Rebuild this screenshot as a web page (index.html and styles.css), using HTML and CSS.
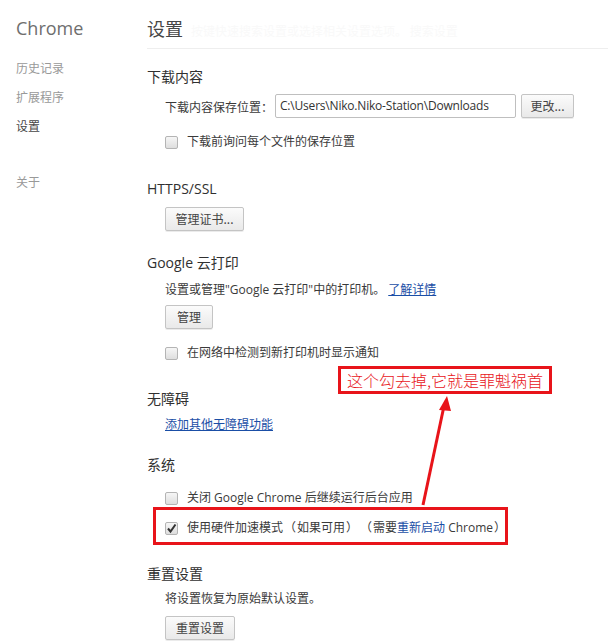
FILE: index.html
```html
<!DOCTYPE html>
<html lang="zh-CN">
<head>
<meta charset="utf-8">
<title>设置</title>
<link rel="stylesheet" href="styles.css">
</head>
<body>
<div class="page">
  <nav class="sidebar">
    <h1 class="brand">Chrome</h1>
    <ul class="nav">
      <li>历史记录</li>
      <li>扩展程序</li>
      <li class="current">设置</li>
      <li class="about">关于</li>
    </ul>
  </nav>
  <main class="main">
    <header class="page-head">
      <h2 class="page-title">设置</h2>
      <span class="search-hint">按键快速搜索设置或选择相关设置选项。 搜索设置</span>
    </header>

    <section class="sec s-download">
      <h3 class="sec-title">下载内容</h3>
      <div class="row row-path">
        <span class="label">下载内容保存位置：</span>
        <span class="path">C:\Users\Niko.Niko-Station\Downloads</span>
        <button class="btn btn-change">更改...</button>
      </div>
      <label class="check row-check gap14"><span class="box"></span><span>下载前询问每个文件的保存位置</span></label>
    </section>

    <section class="sec s-https">
      <h3 class="sec-title">HTTPS/SSL</h3>
      <button class="btn btn-first">管理证书...</button>
    </section>

    <section class="sec s-print">
      <h3 class="sec-title">Google 云打印</h3>
      <p class="text t-print">设置或管理"Google 云打印"中的打印机。 <a class="link">了解详情</a></p>
      <button class="btn btn-print">管理</button>
      <label class="check row-check gap14"><span class="box"></span><span>在网络中检测到新打印机时显示通知</span></label>
    </section>

    <section class="sec s-a11y">
      <h3 class="sec-title">无障碍</h3>
      <p class="text t-a11y"><a class="link">添加其他无障碍功能</a></p>
    </section>

    <section class="sec s-system">
      <h3 class="sec-title">系统</h3>
      <label class="check row-check gap13"><span class="box"></span><span>关闭 Google Chrome 后继续运行后台应用</span></label>
      <label class="check row-check gap10"><span class="box checked"><svg viewBox="0 0 13 13" width="13" height="13"><path d="M3 6.5 L5.5 9.5 L10.5 2.5" fill="none" stroke="#333" stroke-width="2"/></svg></span><span>使用硬件加速模式<span class="paren">（</span>如果可用<span class="paren">）</span><span class="paren">（</span>需要<span class="blue">重新启动</span> Chrome<span class="paren">）</span></span></label>
    </section>

    <section class="sec s-reset">
      <h3 class="sec-title">重置设置</h3>
      <p class="text t-reset">将设置恢复为原始默认设置。</p>
      <button class="btn btn-reset">重置设置</button>
    </section>
  </main>
</div>

<div class="note">这个勾去掉,它就是罪魁祸首</div>
<div class="note-box"></div>
<svg class="arrow" width="608" height="644" viewBox="0 0 608 644">
  <line x1="423" y1="505" x2="444" y2="406" stroke="#e8141a" stroke-width="3"/>
  <polygon points="447,396 439,410 451,411" fill="#e8141a"/>
</svg>
</body>
</html>
```

FILE: styles.css
```css
* { box-sizing: border-box; }
html, body { margin: 0; padding: 0; background: #fff; }
body {
  font-family: "Noto Sans CJK SC", "Open Sans", sans-serif;
  font-size: 12px;
  color: #3a3a3a;
  position: relative;
  width: 608px;
  height: 644px;
  overflow: hidden;
}
.page { display: flex; }
.sidebar { width: 147px; padding-left: 16px; flex: none; }
.brand {
  margin: 17px 0 0;
  font-family: "Open Sans", "Noto Sans CJK SC", sans-serif;
  font-weight: 400;
  font-size: 18px;
  line-height: 22px;
  color: #6e6e6e;
}
.nav { list-style: none; margin: 19px 0 0; padding: 0; }
.nav li { line-height: 20px; height: 20px; color: #999; margin-bottom: 9px; font-size: 12px; }
.nav li.current { color: #464646; }
.nav li.about { margin-top: 36px; }

.main { flex: 1; }
.page-head {
  display: flex;
  align-items: baseline;
  padding-top: 17px;
  height: 49px;
  border-bottom: 1px solid #eeeeee;
}
.page-title {
  margin: 0;
  font-weight: 400;
  font-size: 18px;
  line-height: 22px;
  color: #464646;
}
.search-hint { margin-left: 8px; color: #f9f9f9; font-size: 12px; }

.sec-title {
  margin: 0;
  height: 20px;
  line-height: 20px;
  font-size: 14px;
  font-weight: 400;
  color: #303030;
  font-family: "Open Sans", "Noto Sans CJK SC", sans-serif;
}
.s-download { margin-top: 18px; }
.s-https { margin-top: 27px; }
.s-print { margin-top: 22px; }
.s-a11y { margin-top: 26px; }
.s-system { margin-top: 20px; }
.s-reset { margin-top: 26px; }

.row, .check, .text, .btn { margin-left: 18px; }
.row-path { display: flex; align-items: center; margin-top: 7px; height: 24px; }
.label { margin-right: 2px; }
.path {
  width: 241px;
  height: 24px;
  border: 1px solid #bfbfbf;
  border-radius: 2px;
  line-height: 22px;
  padding-left: 4px;
  font-family: "Open Sans", sans-serif;
  font-size: 12px;
  color: #333;
  letter-spacing: -0.2px;
  white-space: nowrap;
  overflow: hidden;
}
.row .btn { margin-left: 5px; }

.btn {
  display: block;
  height: 24px;
  padding: 0;
  text-align: center;
  border: 1px solid #c4c4c4;
  border-radius: 2px;
  background: linear-gradient(#fbfbfb, #e9e9e9);
  box-shadow: 0 1px 0 rgba(0,0,0,0.08);
  font-family: "Noto Sans CJK SC", "Open Sans", sans-serif;
  font-size: 12px;
  color: #444;
  line-height: 22px;
}
.btn-change { width: 53px; }
.btn-first { margin-top: 8px; width: 79px; }
.btn-print { margin-top: 5px; width: 48px; }
.btn-reset { margin-top: 7px; width: 70px; }

.check {
  display: flex;
  align-items: center;
  height: 20px;
  line-height: 20px;
  font-family: "Open Sans", "Noto Sans CJK SC", sans-serif;
}
.gap14 { margin-top: 14px; }
.gap13 { margin-top: 13px; }
.gap10 { margin-top: 10px; }
.box {
  width: 13px;
  height: 13px;
  border: 1px solid #b4b4b4;
  border-radius: 2px;
  background: linear-gradient(#f6f6f6, #dedede);
  margin-right: 9px;
  flex: none;
  display: flex;
}
.box svg { margin: -1px; }
.paren { display: inline-block; width: 14px; text-align: center; }

.text { margin-top: 7px; margin-bottom: 0; height: 20px; line-height: 20px; font-family: "Open Sans", "Noto Sans CJK SC", sans-serif; }
.t-a11y { margin-top: 6px; }
.t-reset { margin-top: 5px; }
.link { color: #1a4ea6; text-decoration: underline; }
.blue { color: #1a4ea6; }

.note {
  position: absolute;
  left: 338px;
  top: 366px;
  width: 214px;
  height: 28px;
  border: 3px solid #e8141a;
  color: #e8141a;
  font-size: 16px;
  font-weight: 300;
  line-height: 22px;
  text-align: center;
  font-family: "Noto Sans CJK SC", sans-serif;
}
.note-box {
  position: absolute;
  left: 153px;
  top: 507px;
  width: 355px;
  height: 38px;
  border: 3px solid #e8141a;
}
.arrow { position: absolute; left: 0; top: 0; pointer-events: none; }
```
